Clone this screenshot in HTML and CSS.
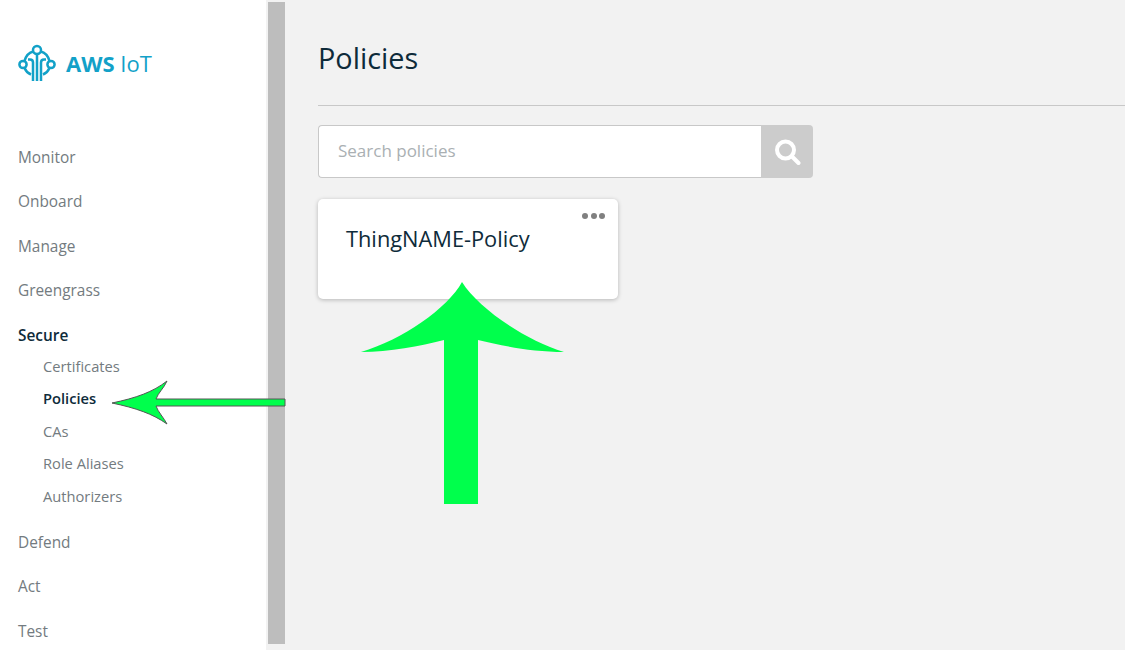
FILE: index.html
```html
<!DOCTYPE html>
<html lang="en">
<head>
  <meta charset="UTF-8">
  <meta name="viewport" content="width=device-width, initial-scale=1.0">
  <title>AWS IoT Policies</title>
  <link rel="stylesheet" href="styles.css">
</head>
<body>
  <div class="sidebar">
    <div class="brand">
      <svg class="brand-icon" width="38" height="38" viewBox="0 0 38 38" fill="none" stroke="#12a1c8" stroke-width="2.500">
        <circle cx="19" cy="6" r="4"/>
        <circle cx="5" cy="20.500" r="3.600"/>
        <circle cx="33" cy="20.500" r="3.600"/>
        <path d="M15.500 7.500C11 8.500 8 11.500 6.500 17M22.500 7.500C27 8.500 30 11.500 31.500 17M6.500 24C8 27.500 10.500 29.500 13 30.500M31.500 24C30 27.500 27.500 29.500 25 30.500"/>
        <path d="M19 10V37M15 37V18.500C15 16.500 14 15.500 12 15.500H10M23 37V18.500C23 16.500 24 15.500 26 15.500H28"/>
      </svg>
      <span class="brand-name"><b>AWS</b> IoT</span>
    </div>
    <nav class="nav">
      <a class="nav-item">Monitor</a>
      <a class="nav-item">Onboard</a>
      <a class="nav-item">Manage</a>
      <a class="nav-item">Greengrass</a>
      <a class="nav-item active">Secure</a>
      <div class="subnav">
        <a class="sub-item">Certificates</a>
        <a class="sub-item active">Policies</a>
        <a class="sub-item">CAs</a>
        <a class="sub-item">Role Aliases</a>
        <a class="sub-item">Authorizers</a>
      </div>
      <a class="nav-item">Defend</a>
      <a class="nav-item">Act</a>
      <a class="nav-item">Test</a>
    </nav>
  </div>

  <div class="main">
    <h1 class="title">Policies</h1>
    <div class="search">
      <input class="search-input" type="text" placeholder="Search policies">
      <button class="search-btn">
        <svg width="28" height="28" viewBox="0 0 28 28" fill="none" stroke="#fff" stroke-linecap="round">
          <circle cx="12.500" cy="12" r="8.500" stroke-width="4"/>
          <path d="M19 18.500L25.500 25" stroke-width="4"/>
        </svg>
      </button>
    </div>
    <div class="card">
      <div class="card-menu"><i></i><i></i><i></i></div>
      <div class="card-name">ThingNAME-Policy</div>
    </div>
  </div>

  <!-- scrollbar and arrows sit on top of the page -->
  <div class="scrollbar"></div>
  <svg class="arrow arrow-left" width="180" height="50" viewBox="0 0 180 50">
    <path d="M1 23C25 18 42 12 56 1C53 8 47 13 45 19H174V26H45C47 32 53 38 56 44C42 34 25 28 1 23Z" fill="#00ff4c" stroke="#555" stroke-width="1"/>
  </svg>
  <svg class="arrow arrow-up" width="206" height="222" viewBox="0 0 206 222">
    <path d="M102 0C88 26 42 58 1 70C30 70 60 64 84 58V222H118V58C143 64 172 70 204 70C165 58 118 26 102 0Z" fill="#00ff4c"/>
  </svg>
</body>
</html>
```

FILE: styles.css
```css
/* base */
body {
  margin: 0;
  height: 650px;
  overflow: hidden;
  display: flex;
  background-color: #f2f2f2;
  color: #0e2b3a;
  font-family: "Open Sans", Arial, sans-serif;
}

/* sidebar */
.sidebar {
  width: 266px;
  flex-shrink: 0;
  padding-left: 18px;
  box-sizing: border-box;
  background: #fff;
}

.brand {
  display: flex;
  align-items: center;
  gap: 10px;
  height: 38px;
  margin-top: 44px;
}

.brand-name {
  font-size: 22px;
  color: #12a1c8;
}

.brand-name b {
  font-weight: 700;
}

.nav {
  display: flex;
  flex-direction: column;
  margin-top: 53.500px;
}

.nav-item {
  height: 44.500px;
  line-height: 44.500px;
  font-size: 15.400px;
  color: #737b80;
}

.nav-item.active {
  color: #0e2b3a;
  font-weight: 600;
}

.subnav {
  display: flex;
  flex-direction: column;
  margin-top: -8.500px;
  margin-bottom: 8.500px;
  padding-left: 25px;
}

.sub-item {
  height: 32.500px;
  line-height: 32.500px;
  font-size: 14.700px;
  color: #737b80;
}

.sub-item.active {
  color: #0e2b3a;
  font-weight: 600;
}

/* main area */
.main {
  flex: 1;
  padding-left: 52px;
}

.title {
  margin: 0;
  height: 106px;
  padding-top: 39px;
  box-sizing: border-box;
  border-bottom: 1px solid #c8c8c8;
  font-size: 28.800px;
  font-weight: 400;
  line-height: 38px;
}

.search {
  display: flex;
  width: 495px;
  height: 53px;
  margin-top: 19px;
}

.search-input {
  flex: 1;
  min-width: 0;
  padding: 0 19px 2px;
  border: 1px solid #c8c8c8;
  border-right: none;
  border-radius: 4px 0 0 4px;
  background: #fff;
  font-family: inherit;
  font-size: 17px;
  outline: none;
}

.search-input::placeholder {
  color: #aab0b3;
}

.search-btn {
  width: 52px;
  padding: 0;
  border: none;
  border-radius: 0 4px 4px 0;
  background-color: #cccccc;
  display: flex;
  align-items: center;
  justify-content: center;
}

.card {
  position: relative;
  width: 300px;
  height: 100px;
  margin-top: 21px;
  padding: 24px 28px;
  box-sizing: border-box;
  border-radius: 5px;
  background: #fff;
  box-shadow: 0 1px 4px rgba(0, 0, 0, 0.25);
}

.card-name {
  font-size: 21.800px;
  line-height: 32px;
}

.card-menu {
  position: absolute;
  top: 14px;
  right: 13px;
  display: flex;
  gap: 2.500px;
}

.card-menu i {
  width: 6px;
  height: 6px;
  border-radius: 50%;
  background: #808080;
}

/* overlays */
.scrollbar {
  position: absolute;
  left: 268px;
  top: 2px;
  width: 17px;
  height: 642px;
  background: #bdbdbd;
}

.arrow {
  position: absolute;
}

.arrow-left {
  left: 111px;
  top: 380px;
}

.arrow-up {
  left: 360px;
  top: 282px;
}
```
